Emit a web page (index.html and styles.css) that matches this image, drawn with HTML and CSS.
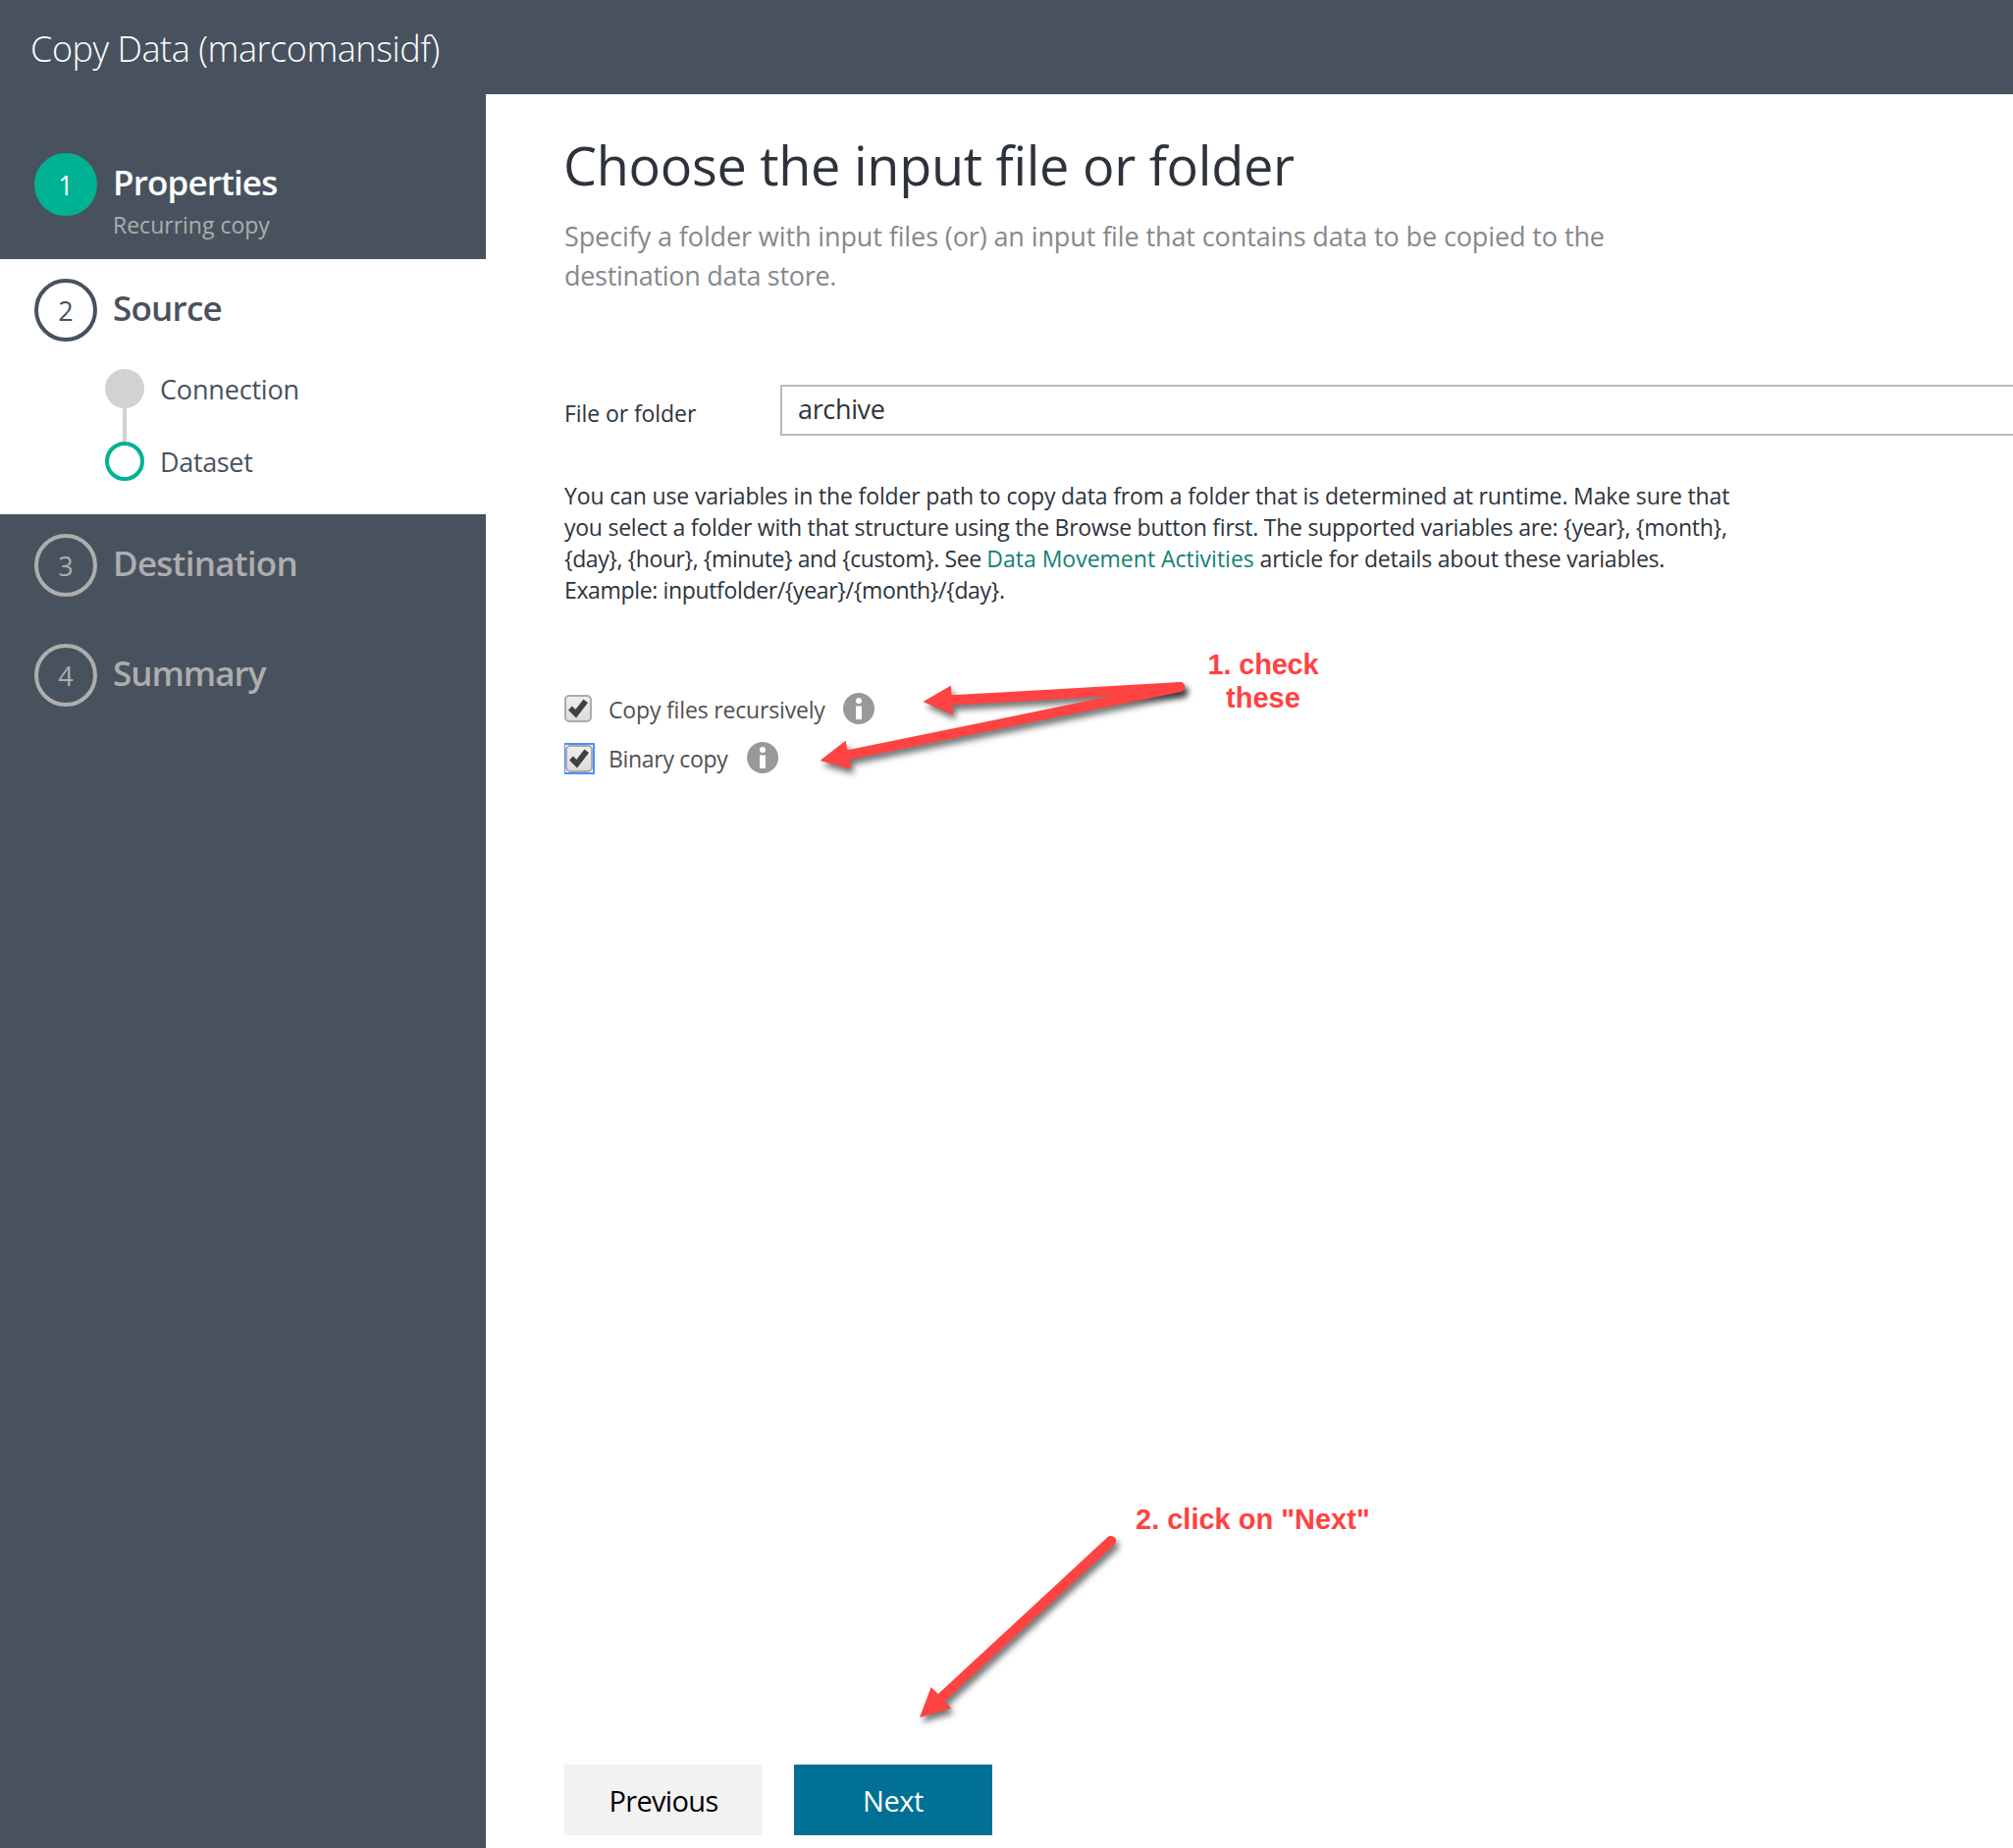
FILE: index.html
```
<!DOCTYPE html>
<html lang="en">
<head>
<meta charset="utf-8">
<title>Copy Data (marcomansidf)</title>
<link rel="stylesheet" href="styles.css">
</head>
<body>
<header class="topbar"><span class="topbar-title">Copy Data (marcomansidf)</span></header>
<div class="layout">
  <nav class="sidebar">
    <section class="step step-done">
      <div class="step-number">1</div>
      <div class="step-body">
        <div class="step-label label-properties">Properties</div>
        <div class="step-note">Recurring copy</div>
      </div>
    </section>
    <section class="step step-current">
      <div class="step-number">2</div>
      <div class="step-body"><div class="step-label label-source">Source</div></div>
      <ul class="substeps">
        <li class="substep"><span class="dot"></span><span>Connection</span></li>
        <li class="connector"></li>
        <li class="substep"><span class="dot dot-active"></span><span class="label-dataset">Dataset</span></li>
      </ul>
    </section>
    <section class="step">
      <div class="step-number">3</div>
      <div class="step-body"><div class="step-label label-destination">Destination</div></div>
    </section>
    <section class="step">
      <div class="step-number">4</div>
      <div class="step-body"><div class="step-label label-summary">Summary</div></div>
    </section>
  </nav>
  <main class="content">
    <h1 class="heading">Choose the input file or folder</h1>
    <p class="intro">Specify a folder with input files (or) an input file that contains data to be copied to the<br><span class="intro-end">destination data store.</span></p>
    <div class="field">
      <label class="field-label" for="path">File or folder</label>
      <input class="field-input" id="path" type="text" value="archive">
    </div>
    <p class="help">
      <span class="help-line line-1">You can use variables in the folder path to copy data from a folder that is determined at runtime. Make sure that</span>
      <span class="help-line line-2">you select a folder with that structure using the Browse button first. The supported variables are: {year}, {month},</span>
      <span class="help-line line-3"><span class="vars">{day}, {hour}, {minute} and {custom}. See </span><a class="link">Data Movement Activities</a> article for details about these variables.</span>
      <span class="help-line line-4">Example: inputfolder/{year}/{month}/{day}.</span>
    </p>
    <div class="options">
      <div class="option">
        <span class="check"><svg viewBox="0 0 20 20" width="20" height="20"><path d="M0 11.5 4 7.5 7.3 11 15.5 0.5 20 4 8 19.5Z" fill="#404040"/></svg></span>
        <span class="option-label label-recursive">Copy files recursively</span>
        <svg class="info" viewBox="0 0 32 32" width="32" height="32"><circle cx="16" cy="16" r="16" fill="#999"/><circle cx="16" cy="8" r="3" fill="#fff"/><path d="M13 13.5h6V27h-6z" fill="#fff"/></svg>
      </div>
      <div class="option">
        <span class="focus-ring"><span class="check"><svg viewBox="0 0 20 20" width="20" height="20"><path d="M0 11.5 4 7.5 7.3 11 15.5 0.5 20 4 8 19.5Z" fill="#404040"/></svg></span></span>
        <span class="option-label label-binary">Binary copy</span>
        <svg class="info info-binary" viewBox="0 0 32 32" width="32" height="32"><circle cx="16" cy="16" r="16" fill="#999"/><circle cx="16" cy="8" r="3" fill="#fff"/><path d="M13 13.5h6V27h-6z" fill="#fff"/></svg>
      </div>
    </div>
    <footer class="actions">
      <button class="btn btn-previous">Previous</button>
      <button class="btn btn-next">Next</button>
    </footer>
  </main>
</div>
<svg class="arrows" viewBox="0 0 2051 1883" width="2051" height="1883">
  <g fill="#ff4242">
    <path class="arrow" d="M940.5 715 969 698.5 969.5 708.3 1202 695A5 5 0 0 1 1202.5 705L970.3 718.6 971 728.5Z"/>
    <path class="arrow" d="M835.5 775 861.5 754.8 863.6 764.3 1201 695.1A5 5 0 0 1 1203 704.9L865.7 774 867.3 783.7Z"/>
    <path class="arrow" d="M937 1750 948.7 1719 955.7 1726.2 1128.5 1566.3A5 5 0 0 1 1135.5 1573.7L962.4 1733.6 969.2 1740.6Z"/>
  </g>
</svg>
<div class="note note-check"><span class="note-first">1. check</span><br>these</div>
<div class="note note-next">2. click on "Next"</div>
</body>
</html>
```
FILE: styles.css
```
* { box-sizing: border-box; }
body {
  margin: 0;
  height: 1883px;
  display: flex;
  flex-direction: column;
  position: relative;
  overflow: hidden;
  background: #fff;
  color: #2d333b;
  font-family: "Open Sans", "Noto Sans", sans-serif;
}
.topbar {
  height: 96px;
  flex: none;
  padding: 0 31px;
  background: #48525e;
  color: #fff;
  font-size: 36px;
  font-weight: 300;
  line-height: 100px;
  letter-spacing: -0.45px;
}
.layout { flex: 1; display: flex; min-height: 0; }

.sidebar { width: 495px; flex: none; padding-top: 40px; background: #48525e; color: #adadad; }
.step { display: grid; grid-template-columns: 64px 1fr; column-gap: 16px; padding: 20px 0 28px 35px; }
.step-number {
  width: 64px;
  height: 64px;
  border: 4px solid #adadad;
  border-radius: 50%;
  font-size: 27px;
  line-height: 57px;
  text-align: center;
}
.step-label { height: 60px; font-size: 35px; font-weight: 600; line-height: 59px; }
.label-properties { letter-spacing: -0.85px; }
.label-source { letter-spacing: -0.75px; }
.label-destination { letter-spacing: -0.75px; }
.label-summary { letter-spacing: -1px; }
.step-note { font-size: 23px; line-height: 26px; }
.step-done { padding-bottom: 22px; }
.step-done .step-number { background: #00b294; border-color: #00b294; color: #fff; }
.step-done .step-label { color: #fff; }
.step-current { padding-bottom: 34px; background: #fff; color: #48525e; }
.step-current .step-number { border-color: #48525e; }
.substeps {
  grid-column: 1 / -1;
  list-style: none;
  margin: 28px 0 0;
  padding: 0 0 0 72px;
  font-size: 27px;
  letter-spacing: -0.18px;
}
.substep { display: flex; align-items: flex-start; gap: 16px; height: 40px; line-height: 42px; }
.dot { width: 40px; height: 40px; border-radius: 50%; background: #d2d2d2; }
.dot-active { background: #fff; border: 4px solid #00b294; }
.connector { width: 4px; height: 34px; margin-left: 18px; background: #d2d2d2; }
.label-dataset { letter-spacing: -0.35px; }

.content { flex: 1; min-width: 0; padding: 36px 0 13px 80px; display: flex; flex-direction: column; }
.heading { margin: 0 0 0 -1px; font-size: 54px; font-weight: 400; line-height: 72px; letter-spacing: -0.27px; }
.intro { margin: 17px 0 0; color: #85888c; font-size: 27px; line-height: 40px; letter-spacing: -0.11px; white-space: nowrap; }
.intro-end { letter-spacing: -0.3px; }
.field { display: flex; margin-top: 91px; height: 52px; }
.field-label { width: 220px; flex: none; font-size: 23px; line-height: 58px; letter-spacing: -0.08px; }
.field-input {
  flex: 1;
  min-width: 0;
  border: 2px solid #babac0;
  border-right: 0;
  border-radius: 0;
  padding: 0 16px 3px;
  background: #fff;
  color: #2d333b;
  font: 400 27px "Open Sans", "Noto Sans", sans-serif;
  letter-spacing: -0.35px;
}
.help { margin: 45px 0 0; font-size: 23px; line-height: 32px; white-space: nowrap; }
.help-line { display: block; }
.line-1 { letter-spacing: -0.14px; }
.line-2 { letter-spacing: -0.245px; }
.line-3 { letter-spacing: -0.21px; }
.line-4 { letter-spacing: -0.35px; }
.vars { letter-spacing: -0.42px; }
.link { color: #128272; letter-spacing: 0; }
.options { margin-top: 89px; display: flex; flex-direction: column; gap: 18px; color: #505050; }
.option { display: flex; align-items: center; height: 32px; }
.check {
  width: 28px;
  height: 28px;
  flex: none;
  border: 2px solid #ababab;
  border-radius: 5px;
  background: linear-gradient(#eee, #dcdcdc);
  display: flex;
  align-items: center;
  justify-content: center;
}
.focus-ring {
  width: 31px;
  height: 32px;
  margin: 2px -3px 0 0;
  border: 2px solid #4d90fe;
  border-left-width: 1px;
}
.option-label { margin-left: 17px; font-size: 23px; line-height: 30px; padding-top: 2px; }
.label-recursive { letter-spacing: -0.17px; }
.label-binary { letter-spacing: -0.3px; }
.info { margin-left: 18px; }
.info-binary { margin-left: 19px; }
.actions { margin-top: auto; display: flex; gap: 32px; }
.btn {
  width: 202px;
  height: 72px;
  border: 0;
  padding: 1px 0 0;
  font: 400 29px "Open Sans", "Noto Sans", sans-serif;
}
.btn-previous { background: #f2f2f2; color: #000; letter-spacing: -0.66px; }
.btn-next { background: #007095; color: #fff; letter-spacing: -0.43px; }

.arrows { position: absolute; left: 0; top: 0; pointer-events: none; }
.arrow { filter: drop-shadow(3px 5px 3px rgba(0, 0, 0, 0.55)); }
.note { position: absolute; color: #ff4242; font: 700 29px/34px "Liberation Sans", Arial, sans-serif; text-align: center; white-space: nowrap; }
.note-first { letter-spacing: -0.2px; }
.note-check { left: 1230px; top: 660px; width: 114px; }
.note-next { left: 1157px; top: 1531px; }
```
